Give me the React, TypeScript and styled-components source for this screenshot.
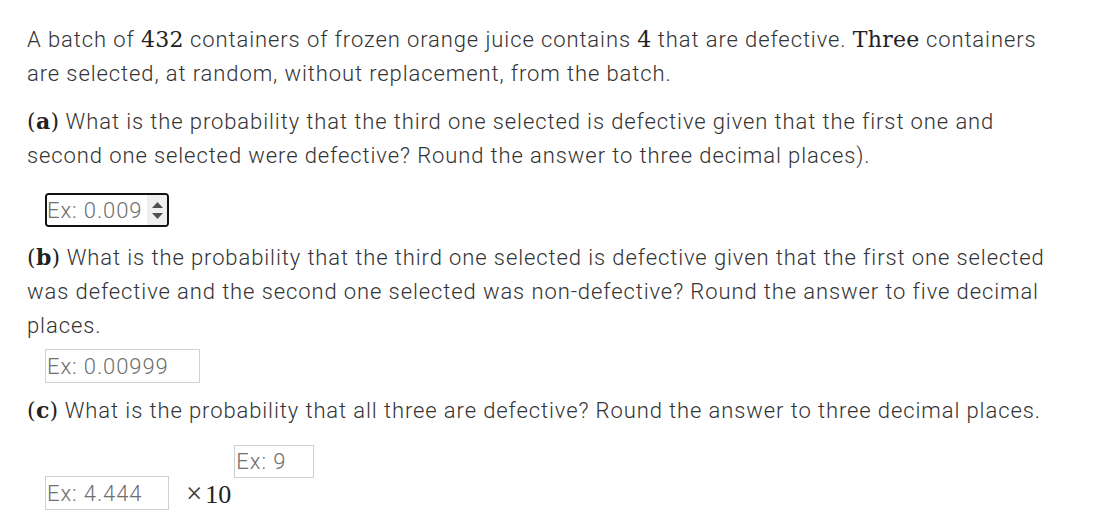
import React from 'react';
import styled, { createGlobalStyle } from 'styled-components';

const GlobalStyle = createGlobalStyle`
  body {
    margin: 0;
    background: #ffffff;
    font-family: Roboto, "Liberation Sans", sans-serif;
    font-weight: 300;
    font-size: 22px;
    letter-spacing: 0.9px;
    color: #333333;
  }
`;

const Page = styled.div`
  width: 1025px;
  padding: 23px 0 0 27px;
`;

const Para = styled.p<{ $gap?: number }>`
  margin: 0 0 ${(p) => p.$gap ?? 14}px;
  line-height: 34px;
`;

// inline math, set in a serif like the rendered TeX
const M = styled.span`
  font-family: "DejaVu Serif", "Liberation Serif", serif;
  font-weight: 400;
  font-size: 22px;
  letter-spacing: 0.3px;
  line-height: 0;
  color: #222222;
`;

const Label = styled(M)`
  b {
    font-weight: 700;
  }
`;

const AnswerRow = styled.div<{ $top: number; $bottom: number }>`
  display: flex;
  align-items: flex-start;
  padding-left: 18px;
  margin: ${(p) => p.$top}px 0 ${(p) => p.$bottom}px;
`;

const Field = styled.input<{ $w: number; $h?: number }>`
  box-sizing: border-box;
  width: ${(p) => p.$w}px;
  height: ${(p) => p.$h ?? 34}px;
  margin: 0;
  padding: 0 1px;
  border: 1px solid #ccd1d5;
  border-radius: 0;
  background: #ffffff;
  font-family: Roboto, "Liberation Sans", sans-serif;
  font-weight: 300;
  font-size: 22px;
  letter-spacing: 0.9px;
  color: #333333;
  outline: none;
  &::placeholder {
    color: #707070;
  }
`;

const FocusBox = styled.div`
  box-sizing: border-box;
  display: flex;
  width: 124px;
  height: 34px;
  border: 2px solid #111111;
  border-radius: 4px;
  overflow: hidden;
`;

const BareField = styled(Field)`
  flex: 1;
  min-width: 0;
  height: 100%;
  border: none;
  padding: 0;
`;

const Spinner = styled.span`
  display: flex;
  flex-direction: column;
  align-items: center;
  justify-content: center;
  gap: 5px;
  width: 20px;
  background: #efefef;
`;

const Exp = styled.div`
  display: flex;
  align-items: flex-start;
  padding-left: 18px;
  margin-top: 17px;
`;

const Mantissa = styled(Field)`
  margin-top: 31px;
`;

const Times = styled.span`
  align-self: flex-end;
  display: flex;
  align-items: baseline;
  margin: 0 3px 3px 17px;
  font-family: "Liberation Serif", "DejaVu Serif", serif;
  font-weight: 400;
  font-size: 26px;
  letter-spacing: 0;
  line-height: 25px;
  color: #222222;
`;

const Cross = styled.span`
  font-size: 29px;
  font-weight: 300;
  color: #3a3a3a;
  margin-right: 3px;
`;

const Tri = ({ up }: { up?: boolean }) => (
  <svg width="11" height="6" viewBox="0 0 11 6">
    <path d={up ? 'M0 6 L5.5 0 L11 6 Z' : 'M0 0 L5.5 6 L11 0 Z'} fill="#505050" />
  </svg>
);

export default function App() {
  return (
    <Page>
      <GlobalStyle />
      <Para>
        A batch of <M>432</M> containers of frozen orange juice contains <M>4</M> that are
        defective. <M>Three</M> containers are selected, at random, without replacement, from
        the batch.
      </Para>
      <Para $gap={0}>
        <Label>
          (<b>a</b>)
        </Label>{' '}
        What is the probability that the third one selected is defective given that the first
        one and second one selected were defective? Round the answer to three decimal places).
      </Para>
      <AnswerRow $top={20} $bottom={14}>
        <FocusBox>
          <BareField $w={100} type="text" placeholder="Ex: 0.009" />
          <Spinner>
            <Tri up />
            <Tri />
          </Spinner>
        </FocusBox>
      </AnswerRow>
      <Para $gap={0}>
        <Label>
          (<b>b</b>)
        </Label>{' '}
        What is the probability that the third one selected is defective given that the first
        one selected was defective and the second one selected was non-defective? Round the
        answer to five decimal places.
      </Para>
      <AnswerRow $top={6} $bottom={11}>
        <Field $w={155} type="text" placeholder="Ex: 0.00999" />
      </AnswerRow>
      <Para $gap={0}>
        <Label>
          (<b>c</b>)
        </Label>{' '}
        What is the probability that all three are defective? Round the answer to three decimal
        places.
      </Para>
      <Exp>
        <Mantissa $w={124} type="text" placeholder="Ex: 4.444" />
        <Times>
          <Cross>×</Cross>10
        </Times>
        <Field $w={80} $h={33} type="text" placeholder="Ex: 9" />
      </Exp>
    </Page>
  );
}
